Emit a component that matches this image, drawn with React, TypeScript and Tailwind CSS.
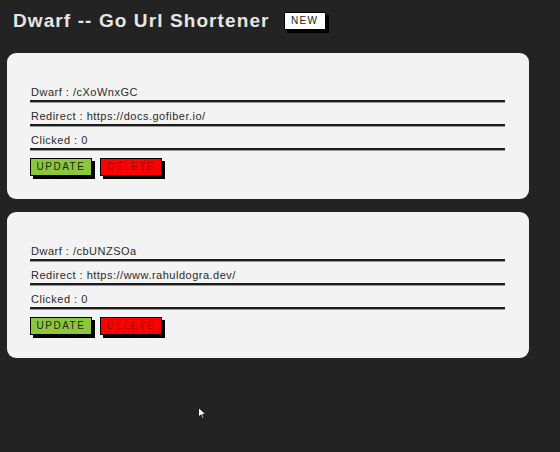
import React from "react";

const items = [
  { dwarf: "/cXoWnxGC", redirect: "https://docs.gofiber.io/", clicked: 0 },
  { dwarf: "/cbUNZSOa", redirect: "https://www.rahuldogra.dev/", clicked: 0 },
];

function Row({ children }: { children: React.ReactNode }) {
  return (
    <div className="mt-[7px] first:mt-0">
      <div className="h-[14px] leading-[12px] pl-[1px] text-[11px] tracking-[0.5px] text-[#2a2a2a]">{children}</div>
      <div className="h-[2px] bg-[#1c1c1c]" />
      <div className="h-[1px] bg-[#9a9a9a]" />
    </div>
  );
}

function Card({ dwarf, redirect, clicked }: { dwarf: string; redirect: string; clicked: number }) {
  return (
    <div className="w-[522px] h-[146px] rounded-[9px] bg-[#f3f3f3] pt-[33px] pl-[23px] pr-[24px]">
      <Row>Dwarf : {dwarf}</Row>
      <Row>Redirect : {redirect}</Row>
      <Row>Clicked : {clicked}</Row>
      <div className="flex gap-[8px] mt-[7px]">
        <button className="w-[62px] h-[18px] border border-black bg-[#8cc63f] shadow-[3px_3px_0_#000] text-[10px] leading-[16px] tracking-[1.5px] text-[#1d2a0a] text-center">
          UPDATE
        </button>
        <button className="w-[62px] h-[18px] border border-black bg-[#ff0000] shadow-[3px_3px_0_#000] text-[10px] leading-[16px] tracking-[1.5px] text-[#a00000] text-center">
          DELETE
        </button>
      </div>
    </div>
  );
}

export default function App() {
  return (
    <div
      className="relative w-[560px] h-[452px] overflow-hidden bg-[#232323]"
      style={{ fontFamily: '"Liberation Sans", Arial, sans-serif' }}
    >
      <div className="flex items-center pl-[13px] pt-[10px] h-[32px]">
        <h1 className="text-[19px] font-bold tracking-[1.1px] text-[#e6e6e6] leading-[22px]">
          Dwarf -- Go Url Shortener
        </h1>
        <span className="ml-[14px] w-[42px] h-[18px] bg-white border border-black shadow-[3px_3px_0_#000] text-[10px] leading-[16px] tracking-[1.2px] text-[#222] text-center">
          NEW
        </span>
      </div>
      <div className="flex flex-col gap-[13px] pl-[7px] pt-[21px]">
        {items.map((it) => (
          <Card key={it.dwarf} {...it} />
        ))}
      </div>
      <svg className="absolute left-[198px] top-[407px]" width="9" height="13" viewBox="0 0 9 13">
        <path d="M0.5 0.5 L0.5 10 L3 7.8 L4.8 11.8 L6.2 11.2 L4.5 7.3 L7.8 7.3 Z" fill="#fff" stroke="#000" strokeWidth="0.8" />
      </svg>
    </div>
  );
}
